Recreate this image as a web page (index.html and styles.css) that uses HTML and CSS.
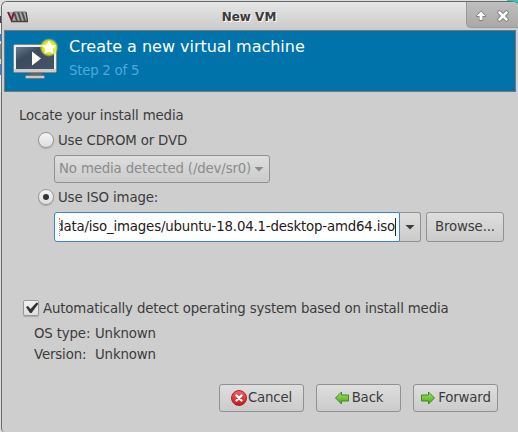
FILE: index.html
```html
<!DOCTYPE html>
<html lang="en">
<head>
<meta charset="utf-8">
<title>New VM</title>
<link rel="stylesheet" href="styles.css">
</head>
<body>
<div class="window">
  <div class="titlebar">
    <svg class="app-icon" width="24" height="14" viewBox="0 0 24 14">
      <path d="M1 2h19l2 9H5z" fill="#a9a9a9"/>
      <path d="M2 2l3.500 8 2.500-8" fill="none" stroke="#7c1933" stroke-width="1.800"/>
      <path d="M8 2l3 9M12 2l3 9M16 2l3 9" stroke="#505050" stroke-width="2"/>
      <path d="M5 11.500h17M20 2l1.500 9" stroke="#444" stroke-width="1.400"/>
      <path d="M8 2h12" stroke="#777"/>
    </svg>
    <span class="title">New VM</span>
    <div class="controls">
      <svg width="54" height="26" viewBox="0 0 54 26">
        <path d="M15 9.500l4.500 4.500h-3v4h-3v-4h-3z" fill="#fff" stroke="#777" stroke-width="1.400" stroke-linejoin="round" paint-order="stroke"/>
        <path d="M33.500 10.500l7 7M40.500 10.500l-7 7" stroke="#777" stroke-width="4.400" stroke-linecap="round"/>
        <path d="M33.500 10.500l7 7M40.500 10.500l-7 7" stroke="#fff" stroke-width="2.600" stroke-linecap="round"/>
      </svg>
    </div>
  </div>
  <div class="banner">
    <svg class="vm-icon" width="48" height="44" viewBox="0 0 48 44">
      <defs>
        <linearGradient id="screen" x1="0" y1="0" x2="1" y2="1"><stop offset="0" stop-color="#6c7b8d"/><stop offset=".35" stop-color="#3b4b60"/><stop offset="1" stop-color="#465466"/></linearGradient>
        <radialGradient id="glow"><stop offset=".5" stop-color="#f2f500"/><stop offset=".75" stop-color="#e3e82a" stop-opacity=".85"/><stop offset="1" stop-color="#d6e020" stop-opacity="0"/></radialGradient>
      </defs>
      <path d="M18 34h12v4h-12z" fill="#62666b"/>
      <rect x="13.500" y="37.500" width="19" height="3" rx="1" fill="#c8c8c8" stroke="#777"/>
      <rect x="1.500" y="6.500" width="43" height="28" rx="1.500" fill="#ededed" stroke="#858585"/>
      <path d="M2 31h42v3h-42z" fill="#ccc"/>
      <rect x="4" y="9" width="38" height="22" fill="url(#screen)"/>
      <path d="M20 13.500v14l9-7z" fill="#fff"/>
      <circle cx="37" cy="9.500" r="9.500" fill="url(#glow)"/>
      <path d="M37 3l1.900 4.200 4.600.5-3.400 3.100 1 4.500-4.100-2.300-4.100 2.300 1-4.500-3.400-3.100 4.600-.5z" fill="#fff" stroke="#fff" stroke-linejoin="round"/>
    </svg>
    <div>
      <div class="heading">Create a new virtual machine</div>
      <div class="step">Step 2 of 5</div>
    </div>
  </div>
  <div class="content">
    <div class="label">Locate your install media</div>
    <div class="option cdrom"><span class="radio"></span>Use CDROM or DVD</div>
    <div class="combo">No media detected (/dev/sr0)<span class="arrow"></span></div>
    <div class="option iso"><span class="radio checked"></span>Use ISO image:</div>
    <div class="file-row">
      <div class="entry"><div class="clip"><span>data/iso_images/ubuntu-18.04.1-desktop-amd64.iso</span></div></div>
      <div class="drop"><span class="arrow"></span></div>
      <div class="button browse">Browse...</div>
    </div>
    <div class="detect"><span class="checkbox"><svg width="14" height="14" viewBox="0 0 14 14"><path d="M2 6l2-1 2.500 3 6-6.500 2 1-7 9.500h-1.500z" fill="#333"/></svg></span>Automatically detect operating system based on install media</div>
    <div class="details">
      <span>OS type:</span><span>Unknown</span>
      <span>Version:</span><span>Unknown</span>
    </div>
    <div class="actions">
      <div class="button cancel"><svg width="16" height="16" viewBox="0 0 16 16">
        <defs><linearGradient id="red" x1="0" y1="0" x2="0" y2="1"><stop offset="0" stop-color="#ef6464"/><stop offset="1" stop-color="#c4161c"/></linearGradient></defs>
        <circle cx="8" cy="8" r="7.500" fill="url(#red)" stroke="#a8252b"/>
        <path d="M5.500 5.500l5 5M10.500 5.500l-5 5" stroke="#fff" stroke-width="2.400" stroke-linecap="round"/></svg><span>Cancel</span></div>
      <div class="button back"><svg width="16" height="16" viewBox="0 0 16 16">
        <defs><linearGradient id="green" x1="0" y1="0" x2="0" y2="1"><stop offset="0" stop-color="#a5e45c"/><stop offset="1" stop-color="#4ba51d"/></linearGradient></defs>
        <path d="M1.500 8l6-6v3h7v6h-7v3z" fill="url(#green)" stroke="#3d8b22" stroke-linejoin="round"/></svg><span>Back</span></div>
      <div class="button forward"><svg width="16" height="16" viewBox="0 0 16 16">
        <path d="M14.500 8l-6-6v3h-7v6h7v3z" fill="url(#green)" stroke="#3d8b22" stroke-linejoin="round"/></svg><span>Forward</span></div>
    </div>
  </div>
</div>
</body>
</html>
```
FILE: styles.css
```css
* { box-sizing: border-box; }
body {
  margin: 0;
  width: 518px;
  height: 432px;
  overflow: hidden;
  padding: 1px 0 0 1px;
  font: 13.333px/20px "DejaVu Sans", sans-serif;
  letter-spacing: -0.155px;
  color: #3c3c3c;
  background:
    linear-gradient(90deg, transparent 507px, #35c4bd 507px) 0 0 / 518px 4px no-repeat,
    linear-gradient(#ddd 0 16px, #444 16px 23px, #eee 23px 34px, #3584e4 34px 41px, #ddd 41px 44px, #888 44px 59px, #ddd 59px 64px, #3584e4 64px 75px, #eee 75px 92px, #ddd 92px);
}
svg { display: block; flex: none; }
.window {
  height: 431px;
  border: solid #686b6b;
  border-width: 1px 0 0 1px;
  border-radius: 6px 6px 0 4px;
  background: #cecece;
  overflow: hidden;
}
.titlebar {
  display: grid;
  grid-template-columns: 66px 1fr 66px;
  height: 28px;
  background: linear-gradient(#e6e6e6, #cacaca);
}
.app-icon { margin: 8px 0 0 4px; }
.title {
  font-size: 12px;
  font-weight: bold;
  letter-spacing: 0;
  line-height: 30px;
  text-align: center;
  padding-right: 22px;
  color: #3b3b3b;
  text-shadow: 1px 1px #fff;
}
.controls {
  justify-self: end;
  width: 52px;
  height: 26px;
  overflow: hidden;
  border: solid #999;
  border-width: 0 0 1px 1px;
  border-radius: 0 0 0 5px;
  background: linear-gradient(#bfbfbf, #a9a9a9);
}
.controls svg { margin-left: -1px; }
.banner {
  display: flex;
  gap: 9px;
  width: 512px;
  height: 62px;
  margin-left: 2px;
  padding: 6px 0 0 7px;
  border: 1px solid #777;
  background: #0073aa;
  color: #fff;
}
.vm-icon { margin-top: 1px; }
.heading { font-size: 16px; letter-spacing: -0.02px; line-height: 20px; }
.step { margin-top: 4px; color: #4fa8dc; letter-spacing: -0.25px; line-height: 20px; }
.content { padding: 14px 0 0 17px; }
.option { display: flex; align-items: center; gap: 4px; height: 20px; margin-left: 19px; }
.cdrom { margin-top: 5px; }
.cdrom .radio { margin-top: -2px; }
.iso { margin-top: 5px; }
.iso .radio { margin-top: -2px; }
.radio {
  width: 16px;
  height: 16px;
  border-radius: 50%;
  border: 1px solid #999;
  background: linear-gradient(#f4f4f4, #dedede);
  box-shadow: 0 1px 1px #aaa;
}
.checked { display: grid; place-items: center; }
.checked::after { content: ""; width: 6px; height: 6px; border-radius: 50%; background: #333; }
.combo, .button, .drop {
  border: 1px solid #919191;
  border-radius: 3px;
  background: linear-gradient(#dedede, #cbcbcb);
}
.combo {
  display: flex;
  align-items: center;
  justify-content: space-between;
  width: 216px;
  height: 28px;
  margin: 4px 0 0 35px;
  padding: 0 5px 0 4px;
  white-space: nowrap;
  color: #8b8b8b;
}
.arrow {
  width: 10px;
  height: 5px;
  background: currentColor;
  clip-path: polygon(0 0, 100% 0, 50% 100%);
}
.file-row { display: flex; height: 30px; margin: 4px 0 0 35px; }
.entry {
  width: 346px;
  padding: 4px 3px 4px 4px;
  border: 1px solid #3584e4;
  border-radius: 3px 0 0 3px;
  background: #fff;
  color: #202020;
}
.clip {
  display: flex;
  justify-content: flex-end;
  height: 18px;
  margin-top: 1px;
  overflow: hidden;
  white-space: nowrap;
  border-left: 1px dotted #999;
  border-right: 1px solid #222;
}
.clip span { line-height: 17px; letter-spacing: -0.18px; }
.drop { width: 21px; display: grid; place-items: center; border-left: 0; border-radius: 0 3px 3px 0; }
.browse { width: 78px; margin-left: 5px; }
.detect { display: flex; align-items: center; gap: 4px; height: 20px; margin: 57px 0 0 4px; }
.checkbox {
  width: 16px;
  height: 16px;
  margin-top: -2px;
  border: 1px solid #999;
  border-radius: 2px;
  background: linear-gradient(#f2f2f2, #ddd);
  box-shadow: 0 1px 1px #aaa;
}
.details { display: grid; grid-template-columns: 61px auto; row-gap: 1px; margin: 5px 0 0 15px; }
.actions { display: flex; gap: 12px; margin: 19px 0 0 200px; }
.button { display: flex; align-items: center; justify-content: center; }
.actions .button { width: 85px; height: 28px; }
.actions .button span { margin-left: 2px; }
.actions .cancel span { margin-left: 1px; }
```
